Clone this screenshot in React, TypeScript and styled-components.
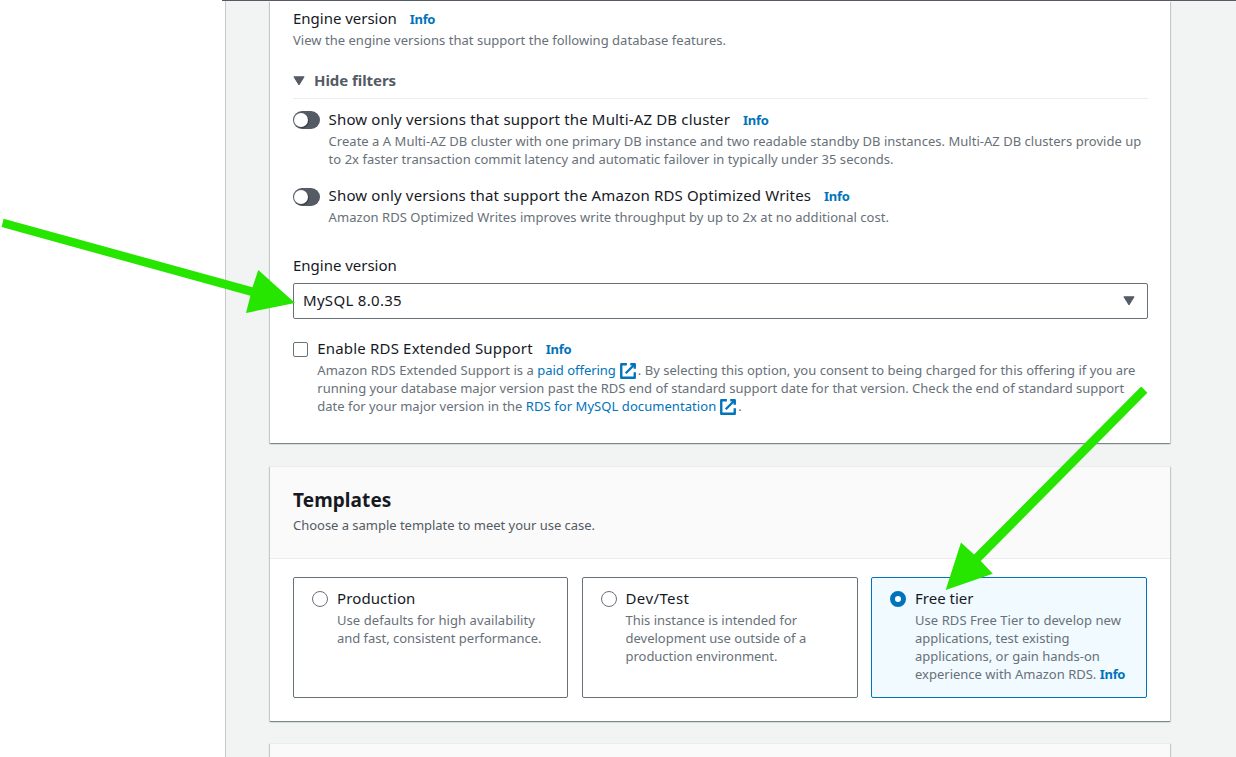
import React from 'react';
import styled, { createGlobalStyle, css } from 'styled-components';

const GlobalStyle = createGlobalStyle`
  * { box-sizing: border-box; }
  body {
    margin: 0;
    background: #ffffff;
    color: #16191f;
    font-family: 'Noto Sans', 'Open Sans', sans-serif;
    overflow: hidden;
  }
`;

type Tracked = { $track?: number };
const tracking = css<Tracked>`
  letter-spacing: ${({ $track = 0 }) => $track}px;
`;

const Page = styled.div`
  position: relative;
  display: flex;
  width: 1236px;
  height: 757px;
  overflow: hidden;
`;

const SideNav = styled.aside`
  flex: 0 0 222px;
`;

const Main = styled.main`
  flex: 1;
  display: flex;
  border-top: 1px solid #545b64;
  padding-left: 3px;
`;

const Content = styled.div`
  flex: 1;
  display: flex;
  flex-direction: column;
  gap: 23px;
  padding: 0 66px 0 44px;
  border-left: 1px solid #c5c9ca;
  background: #f2f3f3;
`;

const Panel = styled.section`
  flex: none;
  background: #ffffff;
  box-shadow:
    0 1px 1px 0 rgba(0, 28, 36, 0.3),
    1px 1px 1px 0 rgba(0, 28, 36, 0.15),
    -1px 1px 1px 0 rgba(0, 28, 36, 0.15);
`;

const SettingsPanel = styled(Panel)`
  height: 442px;
  padding: 6px 22px 0 23px;
`;

const TemplatesPanel = styled(Panel)`
  height: 255px;
  border-top: 1px solid #eaeded;
`;

const NextPanel = styled(Panel)`
  height: 60px;
  margin-top: -1px;
  border-top: 1px solid #eaeded;
  background: #fafafa;
`;

const PanelHeader = styled.header`
  height: 92px;
  padding: 19px 23px 0;
  background: #fafafa;
  border-bottom: 1px solid #eaeded;
`;

const Title = styled.h2<Tracked>`
  margin: 0;
  font-size: 19px;
  line-height: 28px;
  font-weight: 700;
  ${tracking}
`;

const LabelRow = styled.div`
  display: flex;
  align-items: baseline;
  gap: 13px;
  height: 22px;
`;

const Label = styled.span<Tracked>`
  font-size: 15px;
  line-height: 22px;
  white-space: nowrap;
  ${tracking}
`;

const InfoLink = styled.a`
  font-size: 13px;
  line-height: 18px;
  font-weight: 700;
  letter-spacing: -0.3px;
  color: #0073bb;
`;

const Description = styled.p<{ $tone?: string }>`
  margin: 2px 0 0;
  font-size: 13px;
  line-height: 18px;
  color: ${({ $tone = '#687078' }) => $tone};
`;

const Line = styled.span<Tracked>`
  display: block;
  height: 18px;
  white-space: nowrap;
  ${tracking}
`;

const Run = styled.span<Tracked>`
  ${tracking}
`;

const TextLink = styled.a<Tracked>`
  color: #0073bb;
  ${tracking}
`;

const FilterToggle = styled.div`
  display: flex;
  align-items: center;
  gap: 9px;
  height: 30px;
  margin-top: 20px;
  padding-bottom: 7px;
  border-bottom: 1px solid #eaeded;
  color: #545b64;

  svg {
    margin-top: 2px;
  }
`;

const FilterTitle = styled.span`
  font-size: 15px;
  line-height: 22px;
  font-weight: 700;
  letter-spacing: -0.06px;
`;

const OptionRow = styled.div<{ $top: number; $gap: number }>`
  display: flex;
  align-items: flex-start;
  gap: ${({ $gap }) => $gap}px;
  margin-top: ${({ $top }) => $top}px;
`;

const Switch = styled.span<{ $drop: number }>`
  flex: none;
  width: 27px;
  height: 18px;
  margin-top: ${({ $drop }) => $drop}px;
  padding: 2px 1px;
  border-radius: 9px;
  background: #545b64;
`;

const Knob = styled.span`
  display: block;
  width: 14px;
  height: 14px;
  border-radius: 50%;
  background: #ffffff;
  box-shadow: 1px 1px 1px rgba(0, 0, 0, 0.35);
`;

const FieldLabel = styled(LabelRow)`
  margin-top: 28px;
`;

const Select = styled.div`
  display: flex;
  align-items: center;
  justify-content: space-between;
  height: 36px;
  margin-top: 7px;
  padding: 0 12px 0 9px;
  border: 1px solid #687078;
  border-radius: 2px;
  color: #545b64;
`;

const SelectValue = styled(Label)`
  margin-bottom: 2px;
  color: #16191f;
`;

const Checkbox = styled.span`
  flex: none;
  width: 15px;
  height: 15px;
  margin-top: 5px;
  border: 1px solid #687078;
  border-radius: 2px;
  background: #ffffff;
`;

const Tiles = styled.div`
  display: grid;
  grid-template-columns: 275px 276px 276px;
  gap: 13.5px;
  padding: 18px 23px 0;
`;

const Tile = styled.div<{ $selected?: boolean }>`
  display: flex;
  align-items: flex-start;
  gap: 9px;
  height: 121px;
  padding: 9px 0 0 18px;
  border: 1px solid ${({ $selected }) => ($selected ? '#0073bb' : '#687078')};
  border-radius: 2px;
  background: ${({ $selected }) => ($selected ? '#f1faff' : '#ffffff')};
`;

const Radio = styled.span<{ $selected?: boolean }>`
  flex: none;
  width: 16px;
  height: 16px;
  margin-top: 4px;
  border-radius: 50%;
  background: #ffffff;
  border: ${({ $selected }) => ($selected ? '5px solid #0073bb' : '1px solid #687078')};
`;

const ExternalSvg = styled.svg`
  width: 18px;
  height: 18px;
  margin: 0 1px 0 3px;
  vertical-align: -5px;
`;

const Annotations = styled.svg`
  position: absolute;
  inset: 0;
  pointer-events: none;
`;

const Caret = () => (
  <svg width="12" height="10" viewBox="0 0 12 10">
    <path d="M0.9 0.8h10.2L6 8.9z" fill="currentColor" stroke="currentColor" strokeWidth="1" strokeLinejoin="round" />
  </svg>
);

const ExternalIcon = () => (
  <ExternalSvg viewBox="0 0 16 16" fill="none" stroke="#0073bb" strokeWidth="2.1" strokeLinejoin="round">
    <path d="M10 2h4v4" />
    <path d="M6 10l8-8" />
    <path d="M14 9.05V14H2V2h5" />
  </ExternalSvg>
);

type TextLine = [string, number];

const Lines = ({ items }: { items: TextLine[] }) => (
  <>
    {items.map(([text, track]) => (
      <Line key={text} $track={track}>{text}</Line>
    ))}
  </>
);

const toggles: { top: number; drop: number; label: TextLine; lines: TextLine[] }[] = [
  {
    top: 9,
    drop: 3,
    label: ['Show only versions that support the Multi-AZ DB cluster', 0.162],
    lines: [
      ['Create a A Multi-AZ DB cluster with one primary DB instance and two readable standby DB instances. Multi-AZ DB clusters provide up', 0.024],
      ['to 2x faster transaction commit latency and automatic failover in typically under 35 seconds.', 0.039],
    ],
  },
  {
    top: 16,
    drop: 4,
    label: ['Show only versions that support the Amazon RDS Optimized Writes', 0.153],
    lines: [['Amazon RDS Optimized Writes improves write throughput by up to 2x at no additional cost.', 0.044]],
  },
];

const templates: { label: TextLine; lines: TextLine[]; selected?: boolean }[] = [
  {
    label: ['Production', 0.113],
    lines: [
      ['Use defaults for high availability', 0.068],
      ['and fast, consistent performance.', -0.023],
    ],
  },
  {
    label: ['Dev/Test', 0.4],
    lines: [
      ['This instance is intended for', 0],
      ['development use outside of a', 0],
      ['production environment.', -0.026],
    ],
  },
  {
    label: ['Free tier', 0.01],
    selected: true,
    lines: [
      ['Use RDS Free Tier to develop new', 0.064],
      ['applications, test existing', 0],
      ['applications, or gain hands-on', 0],
    ],
  },
];

export default function App() {
  return (
    <Page>
      <GlobalStyle />
      <SideNav />
      <Main>
        <Content>
          <SettingsPanel>
            <LabelRow>
              <Label $track={-0.02}>Engine version</Label>
              <InfoLink>Info</InfoLink>
            </LabelRow>
            <Description>
              <Line $track={0.024}>View the engine versions that support the following database features.</Line>
            </Description>

            <FilterToggle>
              <Caret />
              <FilterTitle>Hide filters</FilterTitle>
            </FilterToggle>

            {toggles.map(({ top, drop, label, lines }) => (
              <OptionRow key={label[0]} $top={top} $gap={8.6}>
                <Switch $drop={drop}><Knob /></Switch>
                <div>
                  <LabelRow>
                    <Label $track={label[1]}>{label[0]}</Label>
                    <InfoLink>Info</InfoLink>
                  </LabelRow>
                  <Description><Lines items={lines} /></Description>
                </div>
              </OptionRow>
            ))}

            <FieldLabel>
              <Label $track={-0.02}>Engine version</Label>
            </FieldLabel>
            <Select>
              <SelectValue $track={0.306}>MySQL 8.0.35</SelectValue>
              <Caret />
            </Select>

            <OptionRow $top={18} $gap={9.3}>
              <Checkbox />
              <div>
                <LabelRow>
                  <Label $track={0.175}>Enable RDS Extended Support</Label>
                  <InfoLink>Info</InfoLink>
                </LabelRow>
                <Description>
                  <Line>
                    <Run $track={0.054}>Amazon RDS Extended Support is a </Run>
                    <TextLink $track={-0.03}>paid offering<ExternalIcon /></TextLink>
                    <Run $track={0.01}>. By selecting this option, you consent to being charged for this offering if you are</Run>
                  </Line>
                  <Line $track={-0.005}>running your database major version past the RDS end of standard support date for that version. Check the end of standard support</Line>
                  <Line>
                    <Run $track={-0.01}>date for your major version in the </Run>
                    <TextLink $track={0.068}>RDS for MySQL documentation<ExternalIcon /></TextLink>.
                  </Line>
                </Description>
              </div>
            </OptionRow>
          </SettingsPanel>

          <TemplatesPanel>
            <PanelHeader>
              <Title $track={0.09}>Templates</Title>
              <Description $tone="#545b64">
                <Line $track={-0.026}>Choose a sample template to meet your use case.</Line>
              </Description>
            </PanelHeader>
            <Tiles>
              {templates.map(({ label, lines, selected }) => (
                <Tile key={label[0]} $selected={selected}>
                  <Radio $selected={selected} />
                  <div>
                    <LabelRow>
                      <Label $track={label[1]}>{label[0]}</Label>
                    </LabelRow>
                    <Description>
                      <Lines items={lines} />
                      {selected && (
                        <Line>
                          experience with Amazon RDS. <InfoLink>Info</InfoLink>
                        </Line>
                      )}
                    </Description>
                  </div>
                </Tile>
              ))}
            </Tiles>
          </TemplatesPanel>

          <NextPanel />
        </Content>
      </Main>

      <Annotations width="1236" height="757" viewBox="0 0 1236 757" fill="#26e600">
        <path d="M3.6 218.8L252.5 287.2L258.3 270L295 303L246 313L250.4 295.8L1.6 227z" />
        <path d="M1141.2 386.6L974 554.6L961 542.4L945.7 590L992.8 573.8L980.8 561L1147.4 392.8z" />
      </Annotations>
    </Page>
  );
}
